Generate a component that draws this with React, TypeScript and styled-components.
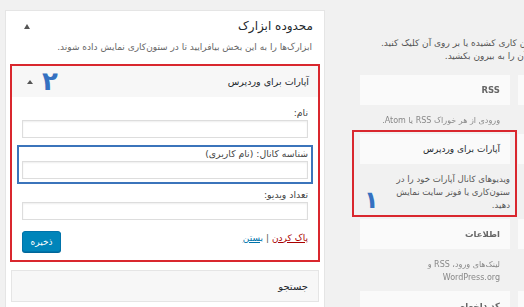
import React from 'react';
import styled, {createGlobalStyle} from 'styled-components';

const GlobalStyle = createGlobalStyle`
  html, body {
    margin: 0;
    padding: 0;
    overflow: hidden;
    background: #f1f1f1;
  }
  body {
    font-family: "DejaVu Sans", "Noto Sans", sans-serif;
    color: #444;
  }
  * {
    box-sizing: border-box;
  }
`

const availableLeft = [
    {title: 'RSS', desc: ['ورودی از هر خوراک RSS یا Atom.'], blurred: true},
    {title: 'آپارات برای وردپرس', desc: ['ویدیوهای کانال آپارات خود را در', 'ستون‌کاری یا فوتر سایت نمایش', 'دهید.'], highlight: true},
    {title: 'اطلاعات', desc: ['لینک‌های ورود، RSS و', 'WordPress.org'], blurred: true},
    {title: 'کد دلخواه', desc: ['کد دلخواه'], blurred: true},
];

const availableRight = ['آرشیو', 'ابر برچسب', 'برگه‌ها', 'تقویم'];

export default function App() {
    return (
        <>
            <GlobalStyle/>
            <Page>
                <Sidebar>
                    <SidebarHead>
                        <SidebarTitle>محدوده ابزارک</SidebarTitle>
                        <Arrow/>
                    </SidebarHead>
                    <SidebarDesc>ابزارک‌ها را به این بخش بیافرایید تا در ستون‌کاری نمایش داده شوند.</SidebarDesc>

                    <EditWidget>
                        <WidgetHead>
                            <WidgetTitle>آپارات برای وردپرس</WidgetTitle>
                            <Arrow $small/>
                            <Marker $left={30} $top={1}>۲</Marker>
                        </WidgetHead>
                        <WidgetBody>
                            <Fields>
                                <Field>
                                    <Label>نام:</Label>
                                    <Input/>
                                </Field>
                                <Field $highlight>
                                    <Label>شناسه کانال: (نام کاربری)</Label>
                                    <Input/>
                                </Field>
                                <Field>
                                    <Label>تعداد ویدیو:</Label>
                                    <Input/>
                                </Field>
                            </Fields>
                            <Actions>
                                <Links>
                                    <DeleteLink>پاک کردن</DeleteLink>
                                    <Sep>|</Sep>
                                    <CloseLink>بستن</CloseLink>
                                </Links>
                                <SaveButton>ذخیره</SaveButton>
                            </Actions>
                        </WidgetBody>
                    </EditWidget>

                    <CollapsedWidget>جستجو</CollapsedWidget>
                </Sidebar>

                <Available>
                    <Intro>
                        برای فعال‌سازی یک ابزارک، آن را به درون یک ستون کاری کشیده یا بر روی آن کلیک کنید.<br/>
                        برای غیرفعال‌سازی یک ابزارک و حذف تنظیماتش، آن را به بیرون بکشید.
                    </Intro>
                    <TileGrid>
                        {availableLeft.map((w, i) => (
                            <React.Fragment key={w.title}>
                                <Cell $highlight={w.highlight}>
                                    <Tile $blurred={w.blurred}>{w.title}</Tile>
                                    <TileDesc $blurred={w.blurred} $flush={w.highlight}>
                                        {w.desc.map((line, j) => (
                                            <React.Fragment key={j}>{line}{j < w.desc.length - 1 && <br/>}</React.Fragment>
                                        ))}
                                    </TileDesc>
                                    {w.highlight && <Marker $left={12} $top={52} $size={24}>۱</Marker>}
                                </Cell>
                                <Cell>
                                    <Tile $blurred>{availableRight[i]}</Tile>
                                    <TileDesc $blurred>{availableRight[i]}</TileDesc>
                                </Cell>
                            </React.Fragment>
                        ))}
                    </TileGrid>
                </Available>
            </Page>
        </>
    );
}

const Page = styled.div`
  display: flex;
  align-items: flex-start;
  gap: 27px;
  padding: 10px 0 0 5px;
  width: 900px;
`

const Sidebar = styled.section`
  width: 320px;
  min-height: 320px;
  background: #fff;
  border: 1px solid #e5e5e5;
  direction: rtl;
`

const SidebarHead = styled.div`
  display: flex;
  align-items: center;
  justify-content: space-between;
  padding: 5px 11px 0 18px;
`

const SidebarTitle = styled.h2`
  margin: 0;
  font-size: 12px;
  line-height: 20px;
  font-weight: normal;
  color: #23282d;
`

const Arrow = styled.span<{ $small?: boolean }>`
  width: 0;
  height: 0;
  border-left: ${p => p.$small ? 3 : 3.5}px solid transparent;
  border-right: ${p => p.$small ? 3 : 3.5}px solid transparent;
  border-bottom: ${p => p.$small ? 4 : 5}px solid #555;
`

const SidebarDesc = styled.p`
  margin: 4px 0 10px;
  padding: 0 12px;
  font-size: 9px;
  line-height: 14px;
  color: #666;
  white-space: nowrap;
`

const EditWidget = styled.div`
  margin: 0 4px;
  border: 2px solid #d9272e;
`

const WidgetHead = styled.div`
  position: relative;
  display: flex;
  align-items: center;
  justify-content: space-between;
  height: 31px;
  padding: 0 9px 0 15px;
  background: #f7f7f7;
`

const WidgetTitle = styled.h3`
  margin: 0;
  font-size: 9.5px;
  font-weight: normal;
  color: #23282d;
`

const Marker = styled.span<{ $left: number; $top: number; $size?: number }>`
  position: absolute;
  left: ${p => p.$left}px;
  top: ${p => p.$top}px;
  font-size: ${p => p.$size ?? 26}px;
  line-height: 28px;
  font-weight: bold;
  color: #3571c1;
  direction: ltr;
`

const WidgetBody = styled.div`
  padding: 9px 10px 8px;
  background: #fff;
`

const Fields = styled.div`
  display: flex;
  flex-direction: column;
  gap: 5px;
`

const Field = styled.div<{ $highlight?: boolean }>`
  display: flex;
  flex-direction: column;
  ${p => p.$highlight && `
    margin: 2px -5px -1px;
    padding: 0 3px 3px;
    border: 2px solid #3b74bb;
  `}
`

const Label = styled.label`
  font-size: 9.3px;
  line-height: 14px;
  color: #444;
`

const Input = styled.input`
  height: 18px;
  width: 100%;
  margin: 0;
  border: 1px solid #ddd;
  box-shadow: inset 0 1px 2px rgba(0, 0, 0, .07);
  background: #fff;
`

const Actions = styled.div`
  display: flex;
  align-items: center;
  justify-content: space-between;
  margin-top: 11px;
`

const Links = styled.div`
  display: flex;
  align-items: center;
  gap: 3px;
  font-size: 9px;
  line-height: 14px;
  margin-top: -8px;
`

const DeleteLink = styled.a`
  color: #a00;
  text-decoration: underline;
`

const Sep = styled.span`
  color: #555;
`

const CloseLink = styled.a`
  color: #0073aa;
  text-decoration: underline;
`

const SaveButton = styled.button`
  width: 39px;
  height: 21px;
  padding: 0;
  border: 1px solid #0073aa;
  border-radius: 3px;
  background: #0085ba;
  box-shadow: 0 1px 0 #006799;
  color: #fff;
  font-family: inherit;
  font-size: 9px;
`

const CollapsedWidget = styled.div`
  display: flex;
  align-items: center;
  height: 32px;
  margin: 8px 5px 0;
  padding: 0 10px;
  background: #f7f7f7;
  border: 1px solid #e5e5e5;
  font-size: 10px;
  color: #23282d;
`

const Available = styled.section`
  width: 330px;
`

const Intro = styled.p`
  width: max-content;
  margin: 27px 0 12px 29px;
  direction: rtl;
  text-align: right;
  white-space: nowrap;
  font-size: 9px;
  line-height: 13px;
  color: #555;
`

const TileGrid = styled.div`
  display: grid;
  grid-template-columns: 158px 158px;
  align-items: start;
`

const Cell = styled.div<{ $highlight?: boolean }>`
  position: relative;
  padding-left: 8px;
  direction: rtl;

  ${p => p.$highlight && `
    &::after {
      content: "";
      position: absolute;
      top: -4px;
      left: 0;
      right: -7px;
      bottom: 2px;
      border: 2px solid #d9272e;
      pointer-events: none;
    }
  `}
`

const Tile = styled.div<{ $blurred?: boolean }>`
  display: flex;
  align-items: center;
  height: 30px;
  padding: 0 10px;
  background: #fafafa;
  font-size: 9px;
  color: #23282d;
  ${p => p.$blurred && `
    font-weight: bold;
    font-size: 8.5px;
    color: #666;
    filter: blur(0.7px);
  `}
`

const TileDesc = styled.div<{ $blurred?: boolean; $flush?: boolean }>`
  padding: 9px ${p => p.$flush ? 0 : 10}px 7px 0;
  font-size: 8.6px;
  line-height: 13px;
  color: #555;
  white-space: nowrap;
  ${p => p.$blurred && `
    font-size: 8px;
    color: #888;
    filter: blur(0.7px);
  `}
`
